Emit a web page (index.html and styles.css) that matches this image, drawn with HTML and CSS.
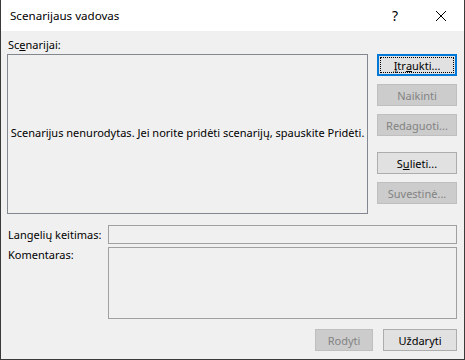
FILE: index.html
```html
<!DOCTYPE html>
<html lang="lt">
<head>
<meta charset="utf-8">
<title>Scenarijaus vadovas</title>
<link rel="stylesheet" href="styles.css">
</head>
<body>
<div class="window">
  <div class="titlebar">
    <div class="title">Scenarijaus vadovas</div>
    <div class="tb-btn help">?</div>
    <div class="tb-btn close">
      <svg width="12" height="12" viewBox="0 0 12 12"><path d="M1 1 L11 11 M11 1 L1 11" stroke="#000" stroke-width="1" fill="none"/></svg>
    </div>
  </div>
  <div class="content">
    <div class="label top-label">Sc<u>e</u>narijai:</div>
    <div class="main-row">
      <div class="listbox">Scenarijus nenurodytas. Jei norite pridėti scenarijų, spauskite Pridėti.</div>
      <div class="side-buttons">
        <div class="btn default"><span class="focus"><u>Į</u>tr<u>a</u>ukti...</span></div>
        <div class="btn disabled">Naikinti</div>
        <div class="btn disabled">Redaguoti...</div>
        <div class="btn spaced">S<u>u</u>lieti...</div>
        <div class="btn disabled">Suvestinė...</div>
      </div>
    </div>
    <div class="field-row">
      <div class="label field-label">Langelių keitimas:</div>
      <div class="input"></div>
    </div>
    <div class="field-row">
      <div class="label field-label">Komentaras:</div>
      <div class="input textarea"></div>
    </div>
    <div class="footer">
      <div class="btn disabled rodyti">Rodyti</div>
      <div class="btn uzdaryti">Uždaryti</div>
    </div>
  </div>
</div>
</body>
</html>
```

FILE: styles.css
```css
* { box-sizing: border-box; }
html, body { margin: 0; padding: 0; }
body {
  font-family: "Noto Sans", "Liberation Sans", sans-serif;
  font-size: 11px;
  color: #000;
  background: #fff;
}
.window {
  width: 465px;
  height: 360px;
  background: #f0f0f0;
  border: 1px solid #3a3a3a;
  border-top: none;
  display: flex;
  flex-direction: column;
}
.titlebar {
  height: 31px;
  background: #fff;
  display: flex;
  align-items: center;
}
.title {
  flex: 1;
  padding-left: 9px;
  font-size: 11.6px;
  padding-bottom: 1px;
}
.tb-btn {
  width: 46px;
  height: 31px;
  display: flex;
  align-items: center;
  justify-content: center;
}
.help { font-size: 14px; }
.close svg { display: block; }
.content {
  padding: 6px 6px 0 6px;
  display: flex;
  flex-direction: column;
}
.label { line-height: 16px; white-space: nowrap; }
.top-label { padding-left: 1px; height: 17px; }
.main-row {
  display: flex;
  gap: 9px;
}
.listbox {
  width: 361px;
  height: 160px;
  border: 1px solid #828790;
  display: flex;
  align-items: center;
  justify-content: center;
  padding-bottom: 4px;
  white-space: nowrap;
}
.side-buttons {
  width: 80px;
  display: flex;
  flex-direction: column;
  gap: 8px;
}
.btn {
  height: 22px;
  border: 1px solid #adadad;
  background: #e1e1e1;
  display: flex;
  align-items: center;
  justify-content: center;
  white-space: nowrap;
}
.btn.disabled {
  background: #cccccc;
  border-color: #bfbfbf;
  color: #838383;
}
.btn.default {
  border: 2px solid #0078d7;
  padding: 1px;
}
.focus {
  width: 100%;
  height: 100%;
  border: 1px dotted #000;
  display: flex;
  align-items: center;
  justify-content: center;
}
.btn.spaced { margin-top: 8px; }
.field-row {
  display: flex;
  align-items: flex-start;
}
.field-label {
  width: 101px;
  padding-left: 1px;
}
.input {
  flex: 1;
  height: 19px;
  border: 1px solid #a0a0a0;
  margin-right: 1px;
}
.main-row + .field-row { margin-top: 11px; }
.main-row + .field-row .field-label { padding-top: 2px; }
.field-row + .field-row { margin-top: 3px; }
.textarea { height: 72px; }
.footer {
  display: flex;
  justify-content: flex-end;
  gap: 10px;
  margin-top: 10px;
  padding-right: 1px;
}
.rodyti { width: 58px; }
.uzdaryti { width: 74px; }
```
